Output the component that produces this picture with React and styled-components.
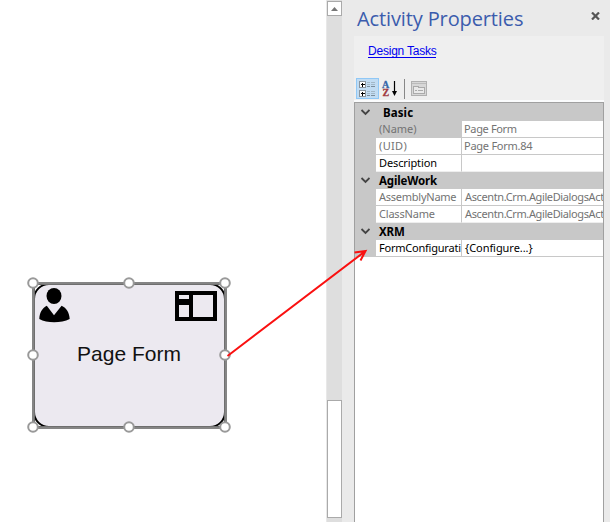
import React from "react";
import styled, { createGlobalStyle } from "styled-components";

const Global = createGlobalStyle`
  * { box-sizing: border-box; }
  body { margin: 0; background: #fff; overflow: hidden; }
`;

const Window = styled.div`
  position: relative;
  display: grid;
  grid-template-columns: 326px 16px 268px;
  width: 610px;
  height: 522px;
  overflow: hidden;
  background: #fff;
`;

const Canvas = styled.main`
  position: relative;
  background: #fff;
`;

const ActivityNode = styled.section`
  position: absolute;
  left: 23px;
  top: 273px;
  width: 213px;
  height: 165px;
`;

const NodeArt = styled.svg`
  display: block;
`;

const NodeLabel = styled.span`
  position: absolute;
  left: 10px;
  width: 192px;
  top: 69px;
  text-align: center;
  font: 21px/24px "Liberation Sans", Arial, sans-serif;
  color: #111;
`;

const Scrollbar = styled.div`
  display: flex;
  flex-direction: column;
  align-items: center;
  justify-content: space-between;
  padding: 1px 0 4px;
  background: #dedede;
  border-left: 1px solid #e8e8e8;
`;

const ScrollButton = styled.button`
  display: grid;
  place-items: center;
  width: 15px;
  height: 15px;
  padding: 0;
  border: 1px solid #aaa;
  background: #fff;
`;

const ScrollThumb = styled.div`
  width: 15px;
  height: 118px;
  border: 1px solid #aaa;
  background: #fff;
`;

const Panel = styled.aside`
  display: flex;
  flex-direction: column;
  padding: 0 6px 0 12px;
  background: #eaeaea;
`;

const PanelHeader = styled.header`
  display: flex;
  justify-content: space-between;
  height: 36px;
  flex: none;
`;

const Title = styled.h1`
  margin: 5px 0 0 3px;
  font: 400 20px/27px "Open Sans", "Noto Sans", sans-serif;
  letter-spacing: -0.12px;
  color: #3b5cad;
  white-space: nowrap;
`;

const CloseIcon = styled.svg`
  margin: 12px 4px 0 0;
`;

const Tools = styled.div`
  flex: none;
  height: 66px;
  padding: 8px 2px 0;
  background: #efefef;
  border-bottom: 2px solid #fbfcfd;
`;

const TaskLink = styled.a`
  display: block;
  width: 68px;
  margin-left: 12px;
  height: 14px;
  font: 12px/15px "Liberation Sans", Arial, sans-serif;
  letter-spacing: -0.22px;
  white-space: nowrap;
  color: #0000f0;
  border-bottom: 1px solid #0000f0;
`;

const Toolbar = styled.div`
  display: flex;
  margin-top: 20px;
  height: 21px;
`;

const Grid = styled.div`
  flex: 1;
  background: #fff;
  border: solid #a0a0a0;
  border-width: 1px 1px 0;
`;

const Category = styled.div`
  display: flex;
  align-items: center;
  height: ${(p) => (p.$first ? 18 : 17)}px;
  padding-left: 5px;
  background: #c8c8c8;
  font: 700 11.5px/17px "Noto Sans", sans-serif;
  letter-spacing: ${(p) => p.$spacing || "0"};
  color: #000;
`;

const CategoryName = styled.span`
  margin-left: ${(p) => (p.$first ? 13 : 9)}px;
`;

const Row = styled.div`
  display: grid;
  grid-template-columns: 21px 86px 1fr;
  height: 17px;
  background: #c8c8c8;
`;

const Cell = styled.div`
  grid-column: ${(p) => p.$column};
  min-width: 0;
  overflow: hidden;
  white-space: nowrap;
  padding-left: ${(p) => (p.$column === 2 ? 3 : p.$inset || 2)}px;
  font: 11px/16px "Noto Sans", sans-serif;
  letter-spacing: ${(p) => p.$spacing || "0"};
  color: ${(p) => (p.$active ? "#000" : "#737373")};
  background: ${(p) => (p.$selected ? "#c8c8c8" : "#fff")};
  border-bottom: 1px solid ${(p) => (p.$last ? "#eee" : "#c8c8c8")};
  border-right: ${(p) => (p.$column === 2 ? "1px solid #c8c8c8" : "0")};
`;

const Arrow = styled.svg`
  position: absolute;
  inset: 0;
  pointer-events: none;
`;

const sections = [
  { name: "Basic", rows: [
    { label: "(Name)", value: "Page Form", selected: true, ls: "0", vs: "-0.35px" },
    { label: "(UID)", value: "Page Form.84", ls: "0.35px", vs: "-0.25px" },
    { label: "Description", value: "", active: true, ls: "-0.12px" },
  ] },
  { name: "AgileWork", rows: [
    { label: "AssemblyName", value: "Ascentn.Crm.AgileDialogsAct", ls: "-0.25px", vs: "-0.38px" },
    { label: "ClassName", value: "Ascentn.Crm.AgileDialogsAct", ls: "-0.2px", vs: "-0.38px" },
  ] },
  { name: "XRM", rows: [
    { label: "FormConfigurati", value: "{Configure...}", active: true, ls: "-0.22px", vs: "-0.05px" },
  ] },
];

const handles = [[10, 10], [106, 10], [202, 10], [10, 82], [202, 82], [10, 154], [106, 154], [202, 154]];

function PageFormNode() {
  return (
    <ActivityNode>
      <NodeArt width="213" height="165">
        <rect x="11" y="11" width="191" height="143" rx="15" fill="#ece9f0" stroke="#000" strokeWidth="2" />
        <path d="M10.5 10.5H202.5V154.5H10.5Z" fill="none" stroke="#858585" strokeWidth="3" />
        <path d="M11.5 11.5H201.5V153.5H11.5Z" fill="none" stroke="#6f6f6f" />
        <ellipse cx="31" cy="23" rx="7.5" ry="8" />
        <path d="M23.8 32.8C19 35.5 16.5 40 16.3 46C24 50.3 38 50.3 46.7 46C46.3 39.5 43.5 35 38.6 32.8L31 42.3Z" />
        <path d="M154 20H192V46H154ZM168 20V46" fill="none" stroke="#000" strokeWidth="4" />
        <path d="M154 26H168V32H154Z" />
        {handles.map(([x, y]) => (
          <circle key={`${x}-${y}`} cx={x} cy={y} r="4.8" fill="#fff" stroke="#999" strokeWidth="2" />
        ))}
      </NodeArt>
      <NodeLabel>Page Form</NodeLabel>
    </ActivityNode>
  );
}

function ToolIcons() {
  return (
    <svg width="80" height="21" shapeRendering="crispEdges" fill="none">
      <rect x="0.5" y="0.5" width="22" height="20" fill="#c1dcf3" stroke="#90c8f6" />
      {[3, 12].map((y) => (
        <g key={y}>
          <rect x="3.5" y={y + 0.5} width="6" height="6" rx="1" fill="#fff" stroke="#8a949c" />
          <path d={`M5 ${y + 3.5}h4M6.5 ${y + 2}v4`} stroke="#000" />
          <path d={`M11 ${y + 1.5}h3m1 0h4M11 ${y + 3.5}h3m1 0h4`} stroke="#a3b8c8" />
          <path d={`M11 ${y + 5.5}h3m1 0h4`} stroke="#7a8d9c" />
        </g>
      ))}
      <g shapeRendering="auto">
        <text x="26" y="9.5" fontFamily="Liberation Serif" fontSize="10" fontWeight="700" fill="#3567a9" stroke="#3567a9" strokeWidth="0.3">A</text>
        <text x="26.5" y="17.8" fontFamily="Liberation Serif" fontSize="10" fontWeight="700" fill="#a13a40" stroke="#a13a40" strokeWidth="0.3">Z</text>
        <path d="M38.5 3V15" stroke="#000" strokeWidth="1.2" />
        <path d="M36 13H41L38.5 18Z" fill="#000" />
      </g>
      <path d="M48.5 1V21" stroke="#888" />
      <rect x="55.5" y="3.5" width="15" height="14" fill="#d7d7d7" stroke="#b0b0b0" />
      <path d="M56 5.5H70" stroke="#bbb" />
      <path d="M57.5 15.5V8.5H62.5V9.5H68.5V15.5Z" fill="#e9e9e9" stroke="#aaa" />
      <path d="M59 12.5h2m1 0h5" stroke="#aaa" />
    </svg>
  );
}

export default function App() {
  return (
    <>
      <Global />
      <Window>
        <Canvas><PageFormNode /></Canvas>
        <Scrollbar>
          <ScrollButton aria-label="Scroll up">
            <svg width="7" height="4"><path d="M0 4L3.5 0L7 4Z" fill="#777" /></svg>
          </ScrollButton>
          <ScrollThumb />
        </Scrollbar>
        <Panel>
          <PanelHeader>
            <Title>Activity Properties</Title>
            <CloseIcon width="9" height="8"><path d="M1 0.5L8 7.5M8 0.5L1 7.5" stroke="#555" strokeWidth="2.2" /></CloseIcon>
          </PanelHeader>
          <Tools>
            <TaskLink>Design Tasks</TaskLink>
            <Toolbar><ToolIcons /></Toolbar>
          </Tools>
          <Grid>
            {sections.map((section, i) => (
              <React.Fragment key={section.name}>
                <Category $first={i === 0} $spacing={i === 0 ? "0.1px" : "-0.15px"}>
                  <svg width="10" height="7" fill="none"><path d="M1.5 1L5.5 5L9.5 1" stroke="#444" strokeWidth="1.8" /></svg>
                  <CategoryName $first={i === 0}>{section.name}</CategoryName>
                </Category>
                {section.rows.map((row, n) => {
                  const last = i < 2 && n === section.rows.length - 1;
                  return (
                    <Row key={row.label}>
                      <Cell $column={2} $active={row.active} $selected={row.selected} $last={last} $spacing={row.ls}>{row.label}</Cell>
                      <Cell $column={3} $active={row.active} $last={last} $spacing={row.vs} $inset={i === 0 ? 2 : 3}>{row.value}</Cell>
                    </Row>
                  );
                })}
              </React.Fragment>
            ))}
          </Grid>
        </Panel>
        <Arrow width="610" height="522" fill="none" stroke="#fa1010" strokeWidth="2">
          <path d="M227.5 356L365.5 251M354.5 252.5L365.5 251L360.5 260.5" />
        </Arrow>
      </Window>
    </>
  );
}
